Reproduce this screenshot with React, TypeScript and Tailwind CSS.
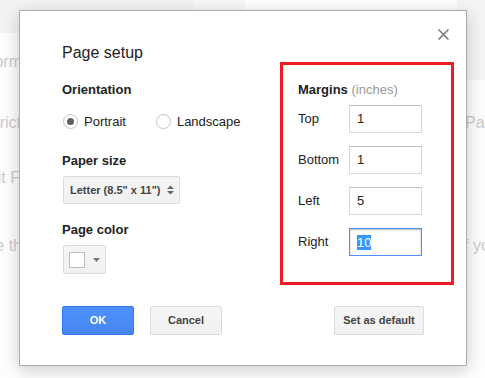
import { ReactNode } from "react";

function Backdrop() {
  // dimmed document behind the modal
  const line = "h-[20px] whitespace-nowrap text-[16px] leading-[20px] text-[#cacaca]";
  return (
    <div className="flex h-full">
      <div className="flex flex-1 flex-col">
        <div className="flex h-[17px]">
          <div className="w-[195px] bg-[#f3f3f3]" />
          <div className="w-[50px] bg-[#f7f7f7]" />
        </div>
        <div className="h-[16px] w-[19px] bg-[#f3f3f3]" />
        <div className={`${line} mt-[19px] -ml-[40px] w-[62px] text-right`}>Platform</div>
        <div className={`${line} mt-[41px] -ml-[40px] w-[61px] text-right text-[#d2caca]`}>Restrict</div>
        <div className={`${line} mt-[35px] -ml-[40px] w-[60px] text-right`}>Edit F</div>
        <div className={`${line} mt-[48px] -ml-[40px] w-[62px] text-right`}>the th</div>
      </div>
      <div className="flex w-[28px] flex-col">
        <div className="h-[80px] bg-[#f4f4f4]" />
        <div className={`${line} mt-[33px] ml-[8px]`}>Page</div>
        <div className={`${line} mt-[103px] ml-[7px]`}>f you</div>
      </div>
    </div>
  );
}

function Radio({ checked = false, className = "" }: { checked?: boolean; className?: string }) {
  return (
    <span
      className={`flex h-[15px] w-[15px] shrink-0 items-center justify-center rounded-full border border-[#c4c4c4] bg-white ${className}`}
    >
      {checked && <span className="h-[7px] w-[7px] rounded-full bg-[#5f5f5f]" />}
    </span>
  );
}

function GrayButton({ children, className = "" }: { children: ReactNode; className?: string }) {
  return (
    <button
      className={`flex h-[29px] items-center justify-center rounded-[2px] border border-[#dcdcdc] bg-gradient-to-b from-[#f5f5f5] to-[#f1f1f1] text-[11px] font-bold text-[#444] ${className}`}
    >
      {children}
    </button>
  );
}

function MarginRow({ label, value, focused = false }: { label: string; value: string; focused?: boolean }) {
  return (
    <div className="flex h-[28px] items-center">
      <span className="w-[51px] text-[13px] text-[#222]">{label}</span>
      <div
        className={`flex h-[28px] w-[73px] items-center border pl-[7px] text-[13px] text-[#222] ${
          focused
            ? "border-[#4d90fe] shadow-[inset_0_1px_2px_rgba(0,0,0,0.3)]"
            : "border-[#d9d9d9] border-t-[#c0c0c0]"
        }`}
      >
        {focused ? <span className="bg-[#3399ff] leading-[15px] text-white">{value}</span> : value}
      </div>
    </div>
  );
}

function PageSetupDialog() {
  return (
    <div className="absolute left-[19px] top-[10px] h-[356px] w-[448px] border border-[#acacac] bg-white px-[42px] pt-[30px] text-[#222] shadow-[0_4px_16px_rgba(0,0,0,0.2)]">
      <button className="absolute right-[17px] top-[18px]">
        <svg width="11" height="11" viewBox="0 0 11 11">
          <path d="M0.5 0.5L10.5 10.5M10.5 0.5L0.5 10.5" stroke="#777" strokeWidth="1.5" fill="none" />
        </svg>
      </button>

      <div className="-mr-[30px] flex items-start">
        {/* left column */}
        <div className="w-[218px] shrink-0">
          <h1 className="text-[16px] leading-[24px]">Page setup</h1>

          <h2 className="mt-[17px] text-[13px] font-bold leading-[16px]">Orientation</h2>
          <div className="ml-px mt-[16px] flex h-[15px] items-center text-[13px] leading-[15px]">
            <Radio checked />
            <span className="ml-[6px]">Portrait</span>
            <Radio className="ml-[30px]" />
            <span className="ml-[6px]">Landscape</span>
          </div>

          <h2 className="mt-[24px] text-[13px] font-bold leading-[16px]">Paper size</h2>
          <div className="ml-px mt-[7px] flex h-[28px] w-[117px] items-center rounded-[2px] border border-[#dcdcdc] bg-gradient-to-b from-[#f5f5f5] to-[#f1f1f1] pl-[6px] text-[11px] font-bold text-[#444]">
            <span className="whitespace-nowrap">Letter (8.5" x 11")</span>
            <svg className="ml-[6px]" width="7" height="10" viewBox="0 0 7 10">
              <path d="M0 4L3.5 0.5L7 4Z M0 6L3.5 9.5L7 6Z" fill="#666" />
            </svg>
          </div>

          <h2 className="mt-[18px] text-[13px] font-bold leading-[16px]">Page color</h2>
          <div className="ml-px mt-[7px] flex h-[29px] w-[43px] items-center rounded-[2px] border border-[#dcdcdc] bg-gradient-to-b from-[#f5f5f5] to-[#f1f1f1] pl-[5px]">
            <span className="h-[16px] w-[16px] border border-[#bdbdbd] bg-white" />
            <svg className="ml-[8px]" width="7" height="4" viewBox="0 0 7 4">
              <path d="M0 0H7L3.5 4Z" fill="#777" />
            </svg>
          </div>
        </div>

        {/* margins, boxed in red */}
        <div className="mt-[21px] h-[223px] w-[174px] shrink-0 border-[3px] border-[#ed1c24] pl-[15px] pt-[17px]">
          <h2 className="text-[13px] leading-[16px]">
            <span className="font-bold">Margins</span> <span className="text-[#999]">(inches)</span>
          </h2>
          <div className="mt-[7px] flex flex-col gap-[13px]">
            <MarginRow label="Top" value="1" />
            <MarginRow label="Bottom" value="1" />
            <MarginRow label="Left" value="5" />
            <MarginRow label="Right" value="10" focused />
          </div>
        </div>
      </div>

      <div className="mt-[21px] flex">
        <button className="flex h-[29px] w-[72px] items-center justify-center rounded-[2px] border border-[#3079ed] bg-gradient-to-b from-[#4d90fe] to-[#4787ed] text-[11px] font-bold text-white">
          OK
        </button>
        <GrayButton className="ml-[16px] w-[72px]">Cancel</GrayButton>
        <GrayButton className="ml-auto w-[90px]">Set as default</GrayButton>
      </div>
    </div>
  );
}

export default function App() {
  return (
    <div className="relative h-[378px] w-[485px] overflow-hidden bg-[#fdfdfd] font-['Liberation_Sans',Arial,sans-serif]">
      <Backdrop />
      <PageSetupDialog />
    </div>
  );
}
